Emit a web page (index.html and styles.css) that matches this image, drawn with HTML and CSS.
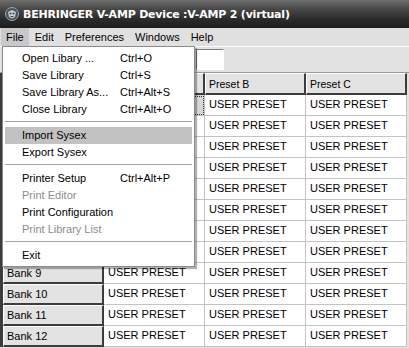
FILE: index.html
```html
<!DOCTYPE html>
<html lang="en">
<head>
    <meta charset="UTF-8">
    <meta name="viewport" content="width=device-width, initial-scale=1.0">
    <title>BEHRINGER V-AMP Device</title>
    <link rel="stylesheet" href="styles.css">
</head>
<body>

    <div class="window">
        <div class="titlebar">
            <svg class="app-icon" width="16" height="16" viewBox="0 0 16 16">
                <circle cx="8" cy="8" r="6.5" fill="#4a5560" stroke="#9aa3ab" stroke-width="1"/>
                <path d="M4 6 L8 4 L12 6 L11 11 L8 12.5 L5 11 Z" fill="#c9d0d6"/>
                <circle cx="6.5" cy="7.5" r="1" fill="#3a4550"/>
                <circle cx="9.5" cy="7.5" r="1" fill="#3a4550"/>
                <path d="M6.5 10.5 H9.5" stroke="#3a4550" stroke-width="1"/>
            </svg>
            <span class="title">BEHRINGER V-AMP Device :V-AMP 2 (virtual)</span>
        </div>

        <div class="menubar">
            <span class="menu open">File</span>
            <span class="menu">Edit</span>
            <span class="menu">Preferences</span>
            <span class="menu">Windows</span>
            <span class="menu">Help</span>
        </div>

        <div class="toolbar">
            <input type="text" class="bank-field">
        </div>

        <div class="client">
            <table class="library">
                <colgroup>
                    <col class="col-bank">
                    <col class="col-preset">
                    <col class="col-preset">
                    <col class="col-preset">
                </colgroup>
                <thead>
                    <tr>
                        <th class="corner"></th>
                        <th>Preset A</th>
                        <th>Preset B</th>
                        <th>Preset C</th>
                    </tr>
                </thead>
                <tbody>
                    <tr><th>Bank 1</th><td class="current">USER PRESET</td><td>USER PRESET</td><td>USER PRESET</td></tr>
                    <tr><th>Bank 2</th><td>USER PRESET</td><td>USER PRESET</td><td>USER PRESET</td></tr>
                    <tr><th>Bank 3</th><td>USER PRESET</td><td>USER PRESET</td><td>USER PRESET</td></tr>
                    <tr><th>Bank 4</th><td>USER PRESET</td><td>USER PRESET</td><td>USER PRESET</td></tr>
                    <tr><th>Bank 5</th><td>USER PRESET</td><td>USER PRESET</td><td>USER PRESET</td></tr>
                    <tr><th>Bank 6</th><td>USER PRESET</td><td>USER PRESET</td><td>USER PRESET</td></tr>
                    <tr><th>Bank 7</th><td>USER PRESET</td><td>USER PRESET</td><td>USER PRESET</td></tr>
                    <tr><th>Bank 8</th><td>USER PRESET</td><td>USER PRESET</td><td>USER PRESET</td></tr>
                    <tr><th>Bank 9</th><td>USER PRESET</td><td>USER PRESET</td><td>USER PRESET</td></tr>
                    <tr><th>Bank 10</th><td>USER PRESET</td><td>USER PRESET</td><td>USER PRESET</td></tr>
                    <tr><th>Bank 11</th><td>USER PRESET</td><td>USER PRESET</td><td>USER PRESET</td></tr>
                    <tr><th>Bank 12</th><td>USER PRESET</td><td>USER PRESET</td><td>USER PRESET</td></tr>
                </tbody>
            </table>
        </div>

        <!-- File menu, dropped down over the grid -->
        <div class="dropdown">
            <div class="item"><span class="label">Open Libary ...</span><span class="key">Ctrl+O</span></div>
            <div class="item"><span class="label">Save Library</span><span class="key">Ctrl+S</span></div>
            <div class="item"><span class="label">Save Library As...</span><span class="key">Ctrl+Alt+S</span></div>
            <div class="item"><span class="label">Close Library</span><span class="key">Ctrl+Alt+O</span></div>
            <div class="separator"></div>
            <div class="item active"><span class="label">Import Sysex</span></div>
            <div class="item"><span class="label">Export Sysex</span></div>
            <div class="separator"></div>
            <div class="item"><span class="label">Printer Setup</span><span class="key">Ctrl+Alt+P</span></div>
            <div class="item disabled"><span class="label">Print Editor</span></div>
            <div class="item"><span class="label">Print Configuration</span></div>
            <div class="item disabled"><span class="label">Print Library List</span></div>
            <div class="separator"></div>
            <div class="item"><span class="label">Exit</span></div>
        </div>
    </div>

</body>
</html>
```

FILE: styles.css
```css
body {
    margin: 0;
    background: #e2e2e2;
    font-family: 'Liberation Sans', Arial, sans-serif;
    font-size: 11px;
    color: #000;
}

.window {
    position: relative;
    width: 409px;
    height: 348px;
    overflow: hidden;
    background: #e2e2e2;
}

.titlebar {
    height: 28px;
    display: flex;
    align-items: center;
    padding-left: 4px;
    background: linear-gradient(#6e6e6e, #4a4a4a 30%, #2a2a2a 70%, #1c1c1c);
}

.app-icon {
    flex: none;
    margin-right: 3px;
}

.title {
    color: #fff;
    font-weight: bold;
    font-size: 11px;
    font-family: 'DejaVu Sans', sans-serif;
    letter-spacing: -0.2px;
}

.menubar {
    height: 18px;
    display: flex;
    align-items: center;
    gap: 1px;
    padding-left: 1px;
    background: #e0e0e0;
}

.menu {
    padding: 0 5px;
    line-height: 18px;
}

.menu.open {
    background: #c9c9c9;
}

.toolbar {
    height: 27px;
    border-top: 1px solid #fff;
    border-bottom: 1px solid #9a9a9a;
    background: #e2e2e2;
    padding: 2px 0 0 196px;
    box-sizing: border-box;
}

.bank-field {
    display: block;
    width: 28px;
    height: 21px;
    box-sizing: border-box;
    border: 1px solid;
    border-color: #808080 #fff #fff #808080;
    background: #fff;
    padding: 0;
}

.client {
    border-left: 3px solid #3c3c3c;
    height: 274px;
    background: #e2e2e2;
}

.library {
    border-collapse: separate;
    border-spacing: 0;
    table-layout: fixed;
    width: 404px;
}

.col-bank {
    width: 101px;
}

.col-preset {
    width: 101px;
}

.library th,
.library td {
    height: 21px;
    padding: 0 0 0 3px;
    box-sizing: border-box;
    text-align: left;
    font-weight: normal;
    white-space: nowrap;
    overflow: hidden;
}

.library th {
    background: #e3e3e3;
    border-top: 1px solid #fff;
    border-left: 1px solid #fff;
    border-right: 2px solid #3c3c3c;
    border-bottom: 2px solid #3c3c3c;
}

.library thead th {
    height: 22px;
    font-size: 10.5px;
}

.library td {
    background: #fff;
    border-right: 1px solid #c4c4c4;
    border-bottom: 1px solid #c4c4c4;
    padding-left: 4px;
    padding-bottom: 2px;
}

.library td.current {
    background: #d6d6d6;
    outline: 1px dotted #333;
    outline-offset: -2px;
}

.dropdown {
    position: absolute;
    left: 2px;
    top: 46px;
    width: 193px;
    padding: 3px 2px 2px 2px;
    box-sizing: border-box;
    background: #fff;
    border: 1px solid #8a8a8a;
    box-shadow: 2px 2px 1px rgba(0, 0, 0, 0.3);
}

.item {
    display: flex;
    height: 17px;
    line-height: 17px;
    padding-left: 17px;
}

.item .label {
    width: 98px;
    flex: none;
}

.item.active {
    background: #c2c2c2;
}

.item.disabled {
    color: #8c8c8c;
}

.separator {
    height: 9px;
    position: relative;
}

.separator::before {
    content: "";
    position: absolute;
    left: 0;
    right: 0;
    top: 3px;
    border-top: 1px solid #a6a6a6;
}
```
